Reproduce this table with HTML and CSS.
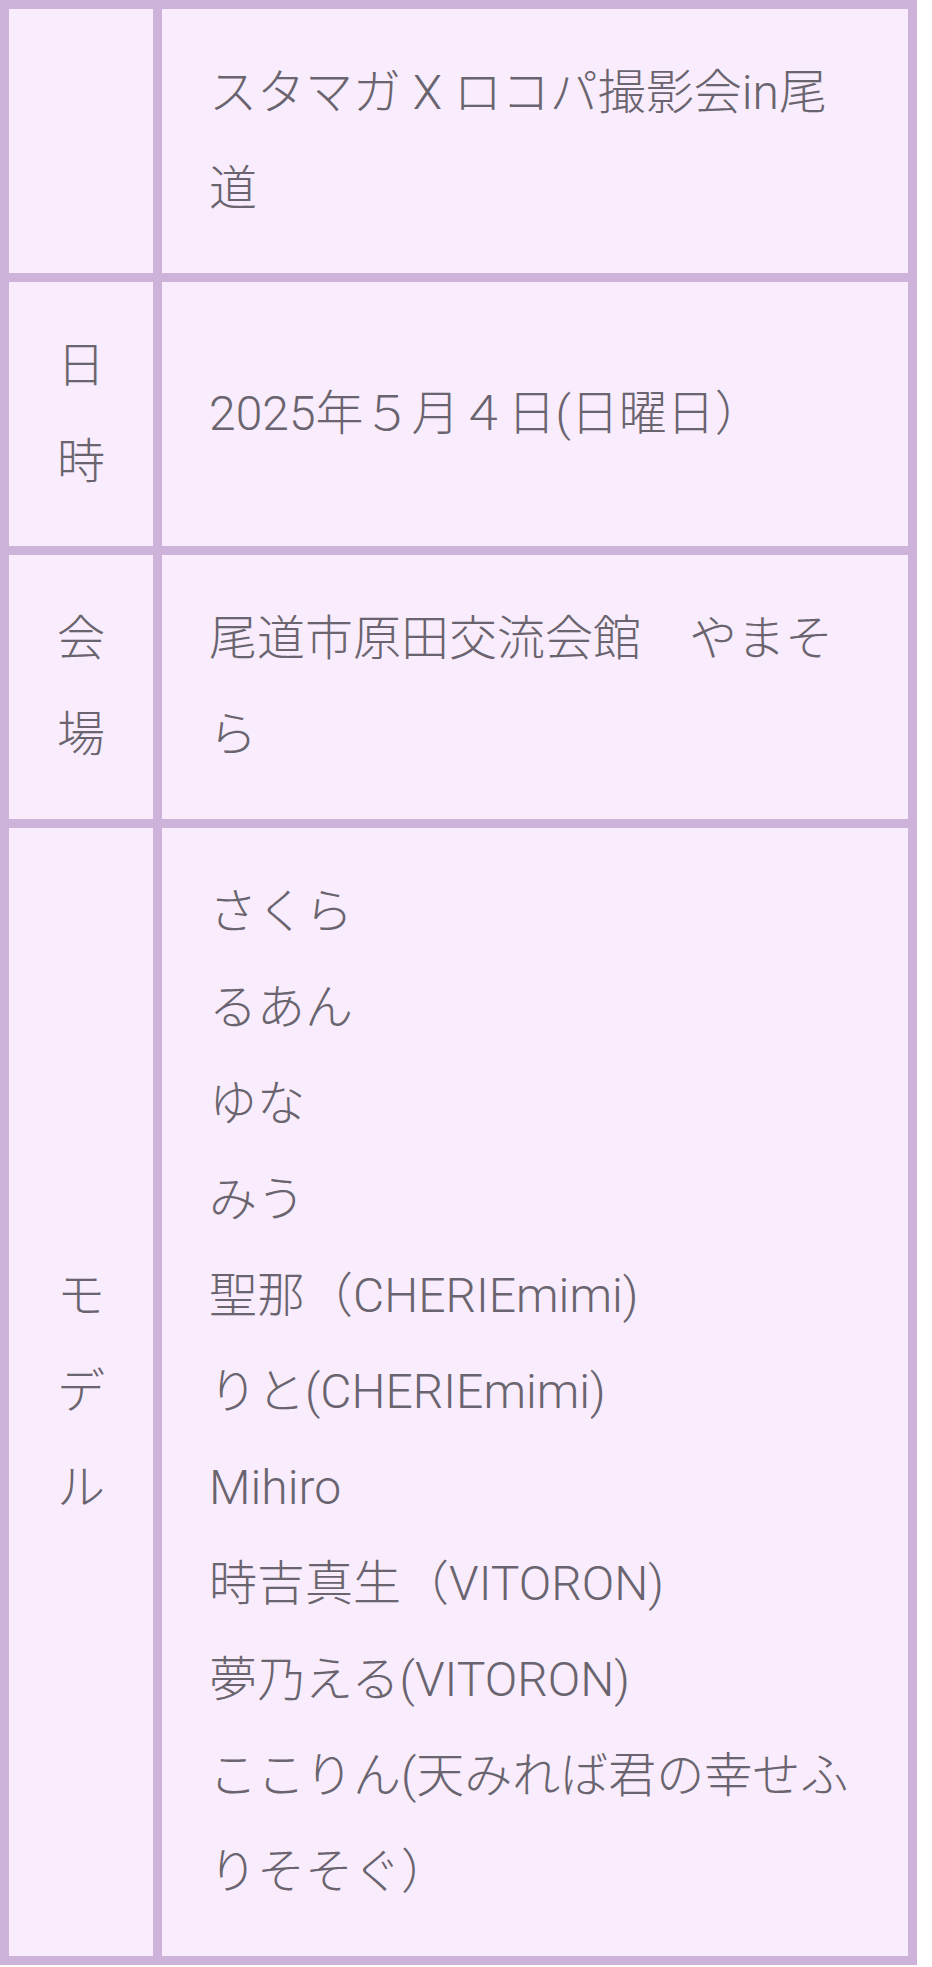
FILE: index.html
```html
<!DOCTYPE html>
<html lang="ja">
<head>
<meta charset="utf-8">
<title>スタマガ X ロコパ撮影会in尾道</title>
<link rel="stylesheet" href="styles.css">
</head>
<body>
<div class="info-table">
  <div class="th"></div>
  <div class="td">スタマガ X ロコパ撮影会in尾道</div>

  <div class="th">日時</div>
  <div class="td">2025年５月４日(日曜日）</div>

  <div class="th">会場</div>
  <div class="td">尾道市原田交流会館　やまそら</div>

  <div class="th">モデル</div>
  <div class="td">
    <div class="names">
      <div>さくら</div>
      <div>るあん</div>
      <div>ゆな</div>
      <div>みう</div>
      <div>聖那（CHERIEmimi)</div>
      <div>りと(CHERIEmimi)</div>
      <div>Mihiro</div>
      <div>時吉真生（VITORON)</div>
      <div>夢乃える(VITORON)</div>
      <div>ここりん(天みれば君の幸せふりそそぐ）</div>
    </div>
  </div>
</div>
</body>
</html>
```

FILE: styles.css
```css
html, body {
  margin: 0;
  padding: 0;
  background: #ffffff;
}

.info-table {
  display: grid;
  grid-template-columns: 144px 746px;
  gap: 9px;
  padding: 9px;
  width: max-content;
  background: #cdb3d9;
  font-family: Roboto, "Noto Sans CJK JP", sans-serif;
  font-size: 48px;
  font-weight: 300;
  line-height: 96px;
  color: #69646e;
}

.th,
.td {
  background: #f9ecfd;
  padding: 36px 0;
  display: flex;
  align-items: center;
  box-sizing: border-box;
}

.th {
  justify-content: center;
  text-align: center;
  padding-left: 40px;
  padding-right: 40px;
}

.td {
  padding-left: 47px;
  padding-right: 51px;
}

.names {
  width: 100%;
}
```
